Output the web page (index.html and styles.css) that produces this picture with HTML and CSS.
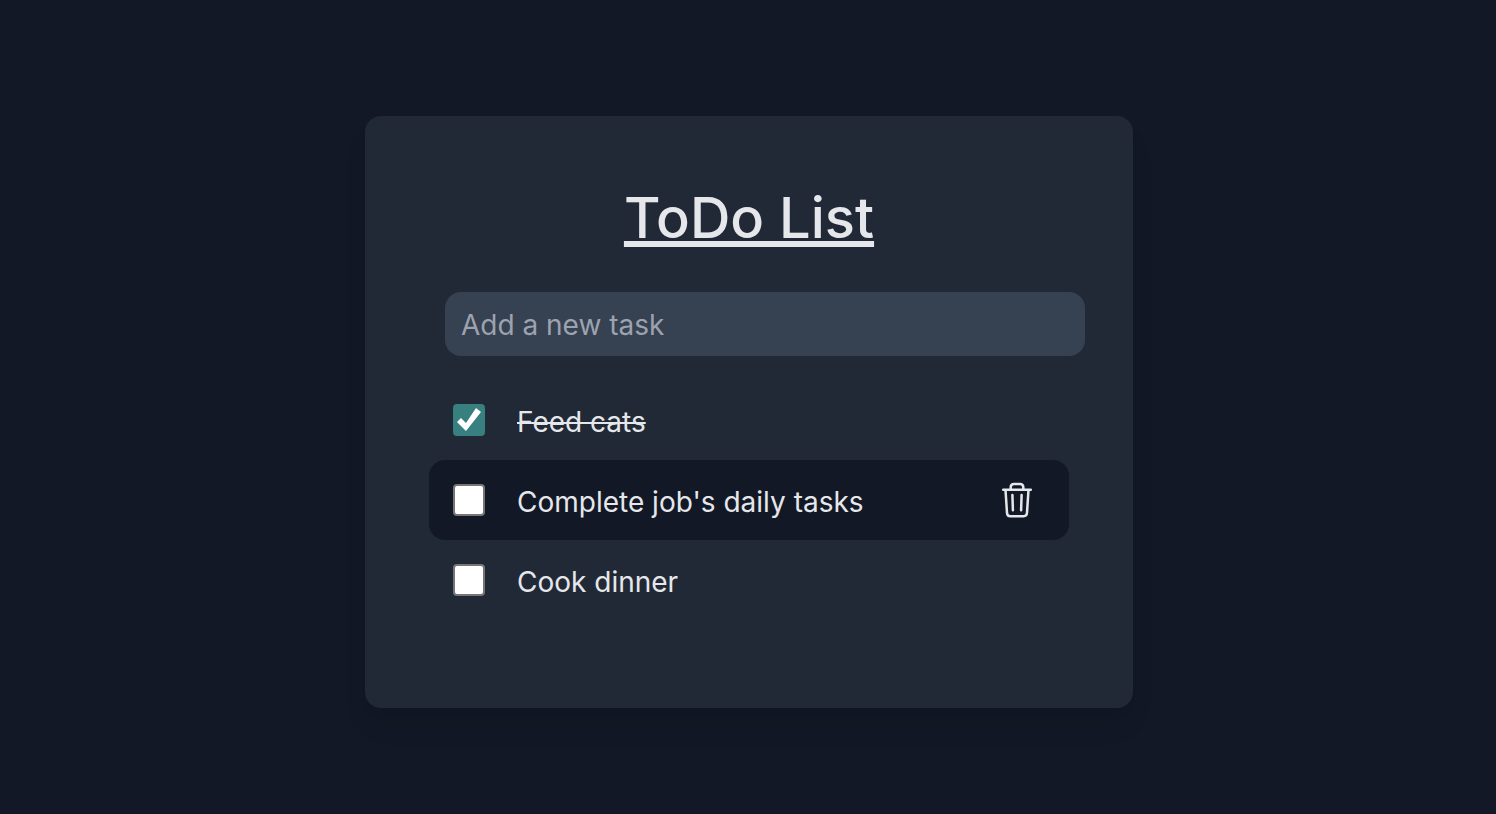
FILE: index.html
```html
<!DOCTYPE html>
<html lang="en">
<head>
<meta charset="utf-8">
<meta name="viewport" content="width=device-width, initial-scale=1">
<title>ToDo List</title>
<link rel="stylesheet" href="styles.css">
</head>
<body>
<main class="card">
  <h1 class="title">ToDo List</h1>
  <form class="new-task">
    <input class="new-task-input" type="text" placeholder="Add a new task" aria-label="Add a new task">
  </form>
  <ul class="tasks">
    <li class="task">
      <input class="check" type="checkbox" id="task-1" checked>
      <label class="task-name" for="task-1">Feed cats</label>
    </li>
    <li class="task task-active">
      <input class="check" type="checkbox" id="task-2">
      <label class="task-name" for="task-2">Complete job's daily tasks</label>
      <button class="delete" type="button" aria-label="Delete task">
        <svg class="delete-icon" viewBox="0 0 40 40" fill="none" stroke="currentColor" stroke-width="2.5" stroke-linecap="round" stroke-linejoin="round" aria-hidden="true">
          <path d="M6.2 9.8H33.8M13.7 9.2V7.2Q13.7 3.9 17 3.9H23Q26.3 3.9 26.3 7.2V9.2M8.5 10L10 32.8Q10.2 36.2 13.4 36.2H26.6Q29.8 36.2 30 32.8L31.5 10M15.4 15L15.9 30.2M24.6 15L24.1 30.2"/>
        </svg>
      </button>
    </li>
    <li class="task">
      <input class="check" type="checkbox" id="task-3">
      <label class="task-name" for="task-3">Cook dinner</label>
    </li>
  </ul>
</main>
</body>
</html>
```
FILE: styles.css
```css
* {
  box-sizing: border-box;
}

body {
  margin: 0;
  padding: 116px 16px 64px 18px;
  background: #121825;
  color: #e5e7eb;
  font-family: Inter, "Liberation Sans", sans-serif;
  font-size: 28px;
  line-height: 40px;
}

.card {
  max-width: 768px;
  margin: 0 auto;
  padding: 64px 64px 88px;
  border-radius: 16px;
  background: #222936;
  box-shadow: 0 20px 30px -6px rgba(0, 0, 0, 0.08), 0 8px 12px -4px rgba(0, 0, 0, 0.04);
}

.title {
  margin: 0 0 36px;
  font-size: 56px;
  font-weight: 500;
  line-height: 76px;
  text-align: center;
  text-decoration: underline;
  text-decoration-thickness: 6px;
  text-underline-offset: 3px;
  text-decoration-skip-ink: none;
}

.new-task {
  margin: 0 -16px 24px 16px;
}

.new-task-input {
  display: block;
  width: 100%;
  height: 64px;
  padding: 2px 16px 0;
  border: 0;
  border-radius: 16px;
  background: #364152;
  color: inherit;
  font: inherit;
}

.new-task-input::placeholder {
  color: #9ca3af;
  opacity: 1;
}

.tasks {
  margin: 0;
  padding: 0;
  list-style: none;
}

.task {
  display: flex;
  align-items: center;
  gap: 32px;
  min-height: 80px;
  padding: 16px 32px 16px 24px;
  border-radius: 16px;
}

.task-active {
  background: #121825;
}

.check {
  appearance: none;
  flex: none;
  width: 32px;
  height: 32px;
  margin: 0;
  border: 2px solid #767676;
  border-radius: 4px;
  background: #fff;
}

.check:checked {
  border: 0;
  background: #387f80;
}

.check:checked::before {
  content: "";
  display: block;
  width: 32px;
  height: 32px;
  background: #fff;
  clip-path: polygon(4px 18px, 8px 14px, 13px 19px, 23px 4px, 28px 8px, 13px 27px);
}

.task-name {
  flex: 1;
  padding-top: 4px;
}

.check:checked + .task-name {
  text-decoration: line-through;
  text-decoration-thickness: 2px;
}

.delete {
  flex: none;
  width: 40px;
  height: 40px;
  padding: 0;
  border: 0;
  background: none;
  color: inherit;
}

.delete-icon {
  display: block;
  width: 40px;
  height: 40px;
}
```
